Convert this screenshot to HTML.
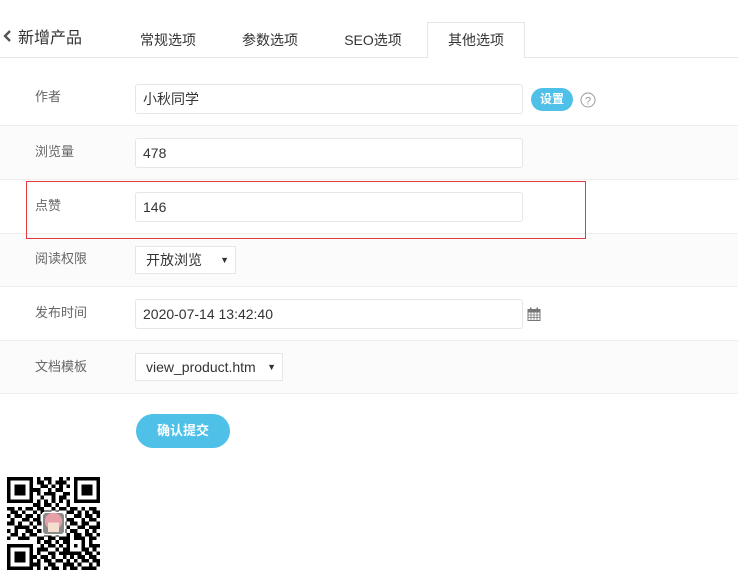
<!DOCTYPE html>
<html><head><meta charset="utf-8">
<style>
*{box-sizing:border-box;margin:0;padding:0}
body{width:738px;height:577px;background:#fff;font-family:"Liberation Sans","Noto Sans CJK SC",sans-serif;position:relative;overflow:hidden;color:#333}
.abs{position:absolute}
.title{left:18px;top:24px;font-size:16px;color:#333}
.chev{left:3px;top:30px}
.tabline{left:0;top:57px;width:738px;height:1px;background:#e6e6e6}
.tab{top:30px;font-size:14px;color:#333;width:98px;text-align:center}
.tabact{left:427px;top:22px;width:98px;height:36px;border:1px solid #e6e6e6;border-bottom:none;background:#fff;text-align:center;font-size:14px;line-height:34px}
.row{left:0;width:738px;border-bottom:1px solid #eee}
.gray{background:#fbfbfb}
.lbl{left:35px;font-size:13px;color:#666}
.inp{left:135px;width:388px;height:30px;border:1px solid #e6e6e6;border-radius:3px;background:#fff;font-size:14px;line-height:28px;padding-left:7px;color:#333}
.sel{left:135px;height:28px;border:1px solid #e6e6e6;background:#fff;font-size:14px;line-height:26px;padding-left:10px;color:#333}
.sel span{position:absolute;right:6px;top:0;font-size:9px}
</style></head><body>
<svg class="abs chev" width="9" height="12" viewBox="0 0 9 12"><path d="M7 1 L2 6 L7 11" stroke="#555" stroke-width="2.4" fill="none"/></svg>
<div class="abs title">新增产品</div>
<div class="abs tab" style="left:119px">常规选项</div>
<div class="abs tab" style="left:221px">参数选项</div>
<div class="abs tab" style="left:324px">SEO选项</div>
<div class="abs tabline"></div>
<div class="abs tabact">其他选项</div>

<div class="abs row" style="top:58px;height:68px"></div>
<div class="abs row gray" style="top:126px;height:54px"></div>
<div class="abs row" style="top:180px;height:54px"></div>
<div class="abs row gray" style="top:234px;height:53px"></div>
<div class="abs row" style="top:287px;height:54px"></div>
<div class="abs row gray" style="top:341px;height:53px"></div>

<div class="abs lbl" style="top:86px">作者</div>
<div class="abs inp" style="top:84px">小秋同学</div>
<div class="abs" style="left:531px;top:88px;width:42px;height:23px;border-radius:12px;background:#4fc1e9;color:#fff;font-size:12px;line-height:23px;text-align:center;font-weight:bold">设置</div>
<svg class="abs" style="left:580px;top:92px" width="16" height="16" viewBox="0 0 16 16"><circle cx="8" cy="8" r="7" stroke="#999" fill="none"/><text x="8" y="12.5" font-size="11" text-anchor="middle" fill="#999" font-family="Liberation Sans">?</text></svg>

<div class="abs lbl" style="top:141px">浏览量</div>
<div class="abs inp" style="top:138px">478</div>

<div class="abs" style="left:26px;top:181px;width:560px;height:58px;border:1px solid #e4393c"></div>
<div class="abs lbl" style="top:195px">点赞</div>
<div class="abs inp" style="top:192px">146</div>

<div class="abs lbl" style="top:248px">阅读权限</div>
<div class="abs sel" style="top:246px;width:101px">开放浏览<span>▼</span></div>

<div class="abs lbl" style="top:302px">发布时间</div>
<div class="abs inp" style="top:299px">2020-07-14 13:42:40</div>
<svg class="abs" style="left:527px;top:307px" width="14" height="14" viewBox="0 0 14 14"><rect x="1" y="2.5" width="12" height="11" fill="none" stroke="#777"/><rect x="1" y="2.5" width="12" height="3" fill="#777"/><path d="M1 8H13M1 10.5H13M4 5V13M7 5V13M10 5V13" stroke="#777" stroke-width=".8"/><rect x="3" y="0.5" width="1.5" height="3" fill="#777"/><rect x="9.5" y="0.5" width="1.5" height="3" fill="#777"/></svg>

<div class="abs lbl" style="top:356px">文档模板</div>
<div class="abs sel" style="top:353px;width:148px">view_product.htm<span>▼</span></div>

<div class="abs" style="left:136px;top:414px;width:94px;height:34px;border-radius:17px;background:#4fc1e9;color:#fff;font-size:13px;font-weight:bold;line-height:34px;text-align:center">确认提交</div>

<svg id="qr" class="abs" style="left:7px;top:477px" width="93" height="93" viewBox="0 0 25 25" shape-rendering="crispEdges"></svg>
<script>
var r=["1111111010110010101111111","1000001011010111001000001","1011101001101010101011101","1011101110010110001011101","1011101010111001101011101","1000001001001011001000001","1111111010101010101111111","0000000110110100100000000","1101011011001011011010110","0110100101110100110101011","1011011010011011001101101","0100110110100110110010110","1101001011011001011011001","0011110100110110100110111","1010011011001011011001010","0110101100110100101101101","1001110011011011101110110","0000000010110101100010100","1111111001011010101010111","1000001011100101100011010","1011101010011011111101101","1011101101101001010110110","1011101010110110101011011","1000001110011001110100101","1111111010101101011011110"];
var s="";for(var y=0;y<25;y++)for(var x=0;x<25;x++)if(r[y][x]=="1")s+='<rect x="'+x+'" y="'+y+'" width="1" height="1" fill="#000"/>';
s+='<rect x="9.3" y="9.3" width="6.4" height="6.4" rx="0.9" fill="#fff"/><rect x="9.7" y="9.7" width="5.6" height="5.6" rx="0.7" fill="#8a8a8a"/><circle cx="12.5" cy="11.9" r="2.3" fill="#e8a0a8"/><rect x="11" y="12.2" width="3" height="2.6" fill="#f5ddd0"/>';
document.getElementById("qr").innerHTML=s;
</script>
</body></html>
